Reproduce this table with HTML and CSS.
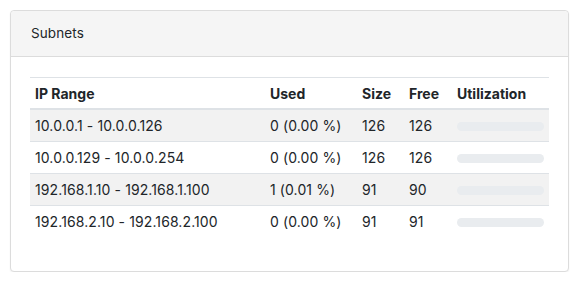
FILE: index.html
```html
<!DOCTYPE html>
<html>
<head>
<meta charset="utf-8">
<link rel="stylesheet" href="styles.css">
</head>
<body>
<div class="card">
  <div class="card-header">Subnets</div>
  <div class="card-body">
    <table class="subnets">
      <colgroup>
        <col class="c-range"><col class="c-used"><col class="c-size"><col class="c-free"><col class="c-util">
      </colgroup>
      <thead>
        <tr><th>IP Range</th><th>Used</th><th>Size</th><th>Free</th><th>Utilization</th></tr>
      </thead>
      <tbody>
        <tr><td>10.0.0.1 - 10.0.0.126</td><td>0 (0.00 %)</td><td>126</td><td>126</td><td><div class="bar"><div class="fill" style="width:0%"></div></div></td></tr>
        <tr><td>10.0.0.129 - 10.0.0.254</td><td>0 (0.00 %)</td><td>126</td><td>126</td><td><div class="bar"><div class="fill" style="width:0%"></div></div></td></tr>
        <tr><td>192.168.1.10 - 192.168.1.100</td><td>1 (0.01 %)</td><td>91</td><td>90</td><td><div class="bar"><div class="fill" style="width:0%"></div></div></td></tr>
        <tr><td>192.168.2.10 - 192.168.2.100</td><td>0 (0.00 %)</td><td>91</td><td>91</td><td><div class="bar"><div class="fill" style="width:0%"></div></div></td></tr>
      </tbody>
    </table>
  </div>
</div>
</body>
</html>
```
FILE: styles.css
```css
html, body {
  margin: 0;
  padding: 0;
  background: #fff;
}
body {
  font-family: Inter, "Noto Sans", sans-serif;
  font-size: 14px;
  color: #212529;
  padding: 10px 14px 0 10px;
}
.card {
  border: 1px solid #dcdcdc;
  border-radius: 4px;
  box-shadow: 0 1px 2px rgba(0,0,0,0.06);
  background: #fff;
}
.card-header {
  background: #f5f5f5;
  border-bottom: 1px solid #dcdcdc;
  border-radius: 4px 4px 0 0;
  height: 45px;
  line-height: 45px;
  padding: 0 20px;
  font-size: 13.5px;
  letter-spacing: 0.1px;
}
.card-body {
  padding: 20px 19px 34px 19px;
}
.subnets {
  width: 100%;
  border-collapse: collapse;
  border-top: 1px solid #dee2e6;
}
.c-range { width: 235px; }
.c-used { width: 92px; }
.c-size { width: 47px; }
.c-free { width: 48px; }
.c-util { width: 97px; }
th, td {
  text-align: left;
  padding: 5px 5px;
  line-height: 21px;
  font-size: 14px;
}
td {
  letter-spacing: 0.1px;
}
th {
  font-weight: 700;
  border-bottom: 2px solid #dee2e6;
  padding-top: 5px;
  padding-bottom: 4px;
}
td {
  border-bottom: 1px solid #dee2e6;
}
tbody tr:last-child td {
  border-bottom: none;
}
tbody tr:nth-child(odd) {
  background: #f2f2f2;
}
.bar {
  height: 9px;
  border-radius: 5px;
  background: #e9ecef;
  overflow: hidden;
  margin-top: 2px;
}
.fill {
  height: 100%;
  background: #007bff;
}
```
